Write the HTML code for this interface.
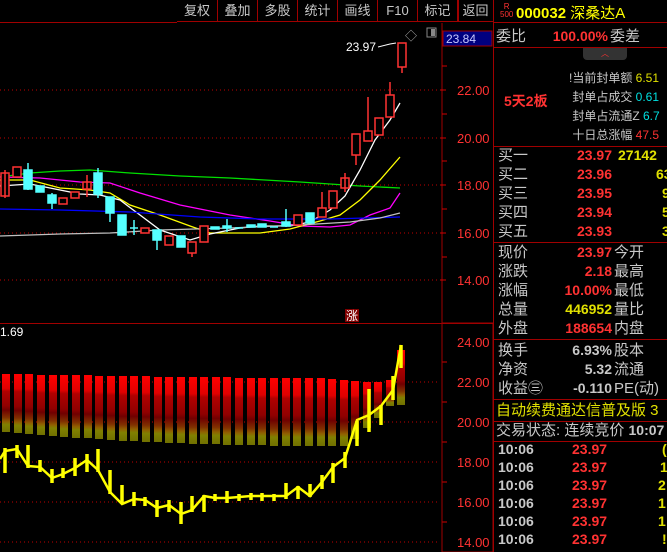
<!DOCTYPE html>
<html><head><meta charset="utf-8"><style>
*{margin:0;padding:0;box-sizing:border-box}
body{width:667px;height:552px;background:#000;overflow:hidden;position:relative;font-family:"Liberation Sans","Noto Sans CJK SC",sans-serif;color:#c8c8c8}
.tb{position:absolute;top:0;height:22px;border-right:1px solid #a00000;border-bottom:1px solid #a00000;font-size:13px;color:#c8c8c8;text-align:center;line-height:22px}
.rp{position:absolute;left:493px;top:0;width:174px;height:552px;border-left:1px solid #a00000}
.row{position:absolute;left:4px;font-size:15px;white-space:nowrap;height:19px;line-height:19px}
.n{position:absolute;font-weight:bold;font-size:14px;font-family:"Liberation Sans",sans-serif;white-space:nowrap;text-align:right}
.r{color:#ff3232}.y{color:#e0e000}.w{color:#c8c8c8}.c{color:#00e0e0}
.hl{position:absolute;left:0;width:174px;height:1px;background:#a00000}
</style></head><body>
<div class="tb" style="left:177px;width:41px">复权</div>
<div class="tb" style="left:218px;width:40px">叠加</div>
<div class="tb" style="left:258px;width:40px">多股</div>
<div class="tb" style="left:298px;width:40px">统计</div>
<div class="tb" style="left:338px;width:40px">画线</div>
<div class="tb" style="left:378px;width:40px">F10</div>
<div class="tb" style="left:418px;width:40px">标记</div>
<div class="tb" style="left:458px;width:35px;font-size:12px">+自选</div>
<div style="position:absolute;left:0;top:22px;width:177px;height:1px;background:#a00000"></div>
<div style="position:absolute;left:458px;top:0;width:35px;height:22px;font-size:13px;line-height:22px;text-align:center;border-bottom:1px solid #a00000;background:#000">返回</div>
<div style="position:absolute;left:458px;top:0;width:35px;height:22px;border-left:1px solid #a00000"></div>
<svg style="position:absolute;left:0;top:0" width="493" height="552">
<line x1="442" y1="23" x2="442" y2="552" stroke="#a00000"/>
<line x1="0" y1="323.5" x2="493" y2="323.5" stroke="#a00000"/>
<rect x="443" y="31" width="49" height="15" fill="#000080" stroke="#a00000"/>
<text x="446" y="43" fill="#c8c8ff" font-size="12" font-family="Liberation Sans">23.84</text>
<text x="405" y="40" fill="#aaa" font-size="12">◇</text>
<rect x="427" y="28" width="9" height="9" fill="none" stroke="#888"/><rect x="431" y="29" width="4" height="7" fill="#888"/>
<g stroke="#c00000" stroke-dasharray="1,3">
<line x1="0" y1="90" x2="440" y2="90"/><line x1="0" y1="138" x2="440" y2="138"/><line x1="0" y1="185" x2="440" y2="185"/><line x1="0" y1="233" x2="440" y2="233"/><line x1="0" y1="280" x2="440" y2="280"/>
<line x1="0" y1="382" x2="440" y2="382"/><line x1="0" y1="422" x2="440" y2="422"/><line x1="0" y1="462" x2="440" y2="462"/><line x1="0" y1="502" x2="440" y2="502"/><line x1="0" y1="542" x2="440" y2="542"/>
</g>
<g stroke="#d00000"><line x1="442" y1="66" x2="447" y2="66"/><line x1="442" y1="114" x2="447" y2="114"/><line x1="442" y1="161" x2="447" y2="161"/><line x1="442" y1="209" x2="447" y2="209"/><line x1="442" y1="257" x2="447" y2="257"/><line x1="442" y1="362" x2="447" y2="362"/><line x1="442" y1="402" x2="447" y2="402"/><line x1="442" y1="442" x2="447" y2="442"/><line x1="442" y1="482" x2="447" y2="482"/><line x1="442" y1="522" x2="447" y2="522"/>
<line x1="440" y1="90" x2="446" y2="90"/><line x1="440" y1="138" x2="446" y2="138"/><line x1="440" y1="185" x2="446" y2="185"/><line x1="440" y1="233" x2="446" y2="233"/><line x1="440" y1="280" x2="446" y2="280"/></g>
<g fill="#ff3232" font-size="13" font-family="Liberation Sans">
<text x="457" y="95">22.00</text><text x="457" y="143">20.00</text><text x="457" y="190">18.00</text><text x="457" y="238">16.00</text><text x="457" y="285">14.00</text>
<text x="457" y="347">24.00</text><text x="457" y="387">22.00</text><text x="457" y="427">20.00</text><text x="457" y="467">18.00</text><text x="457" y="507">16.00</text><text x="457" y="547">14.00</text>
</g>
<rect x="442" y="323" width="51" height="229" fill="none" stroke="#a00000"/>
<polyline fill="none" stroke="#00e000" stroke-width="1.3" points="0,177 30,173 60,171 90,170 130,173 180,176 230,178 300,182 360,186 400,188"/>
<polyline fill="none" stroke="#ff00ff" stroke-width="1.3" points="0,177 40,178 80,182 110,183 140,193 180,205 230,215 270,221 300,226 330,227 350,225 370,215 390,208 400,193"/>
<polyline fill="none" stroke="#ffff00" stroke-width="1.3" points="0,180 30,180 60,188 90,190 110,193 130,205 160,215 190,226 210,233 230,233 260,233 290,229 320,221 340,215 360,200 380,180 400,157"/>
<polyline fill="none" stroke="#ffffff" stroke-width="1.3" points="0,186 30,184 60,190 80,194 100,195 120,200 140,215 160,230 190,240 210,234 240,228 260,226 290,226 310,222 330,210 345,196 360,170 375,140 390,120 400,103"/>
<polyline fill="none" stroke="#0000ff" stroke-width="1.3" points="0,209 60,210 130,212 200,217 260,219 330,219 400,217"/>
<polyline fill="none" stroke="#c0c0c0" stroke-width="1.3" points="0,236 60,234 110,233 160,230 230,228 300,225 350,222 380,218 400,213"/>
<g stroke-width="1.5">
<g stroke="#ff3232" fill="#000">
<rect x="1" y="173" width="8" height="23"/><rect x="13" y="167" width="8" height="10"/><rect x="59" y="198" width="8" height="6"/><rect x="71" y="192" width="8" height="6"/><rect x="83" y="182" width="8" height="7"/><rect x="141" y="228" width="8" height="5"/><rect x="165" y="236" width="8" height="9"/><rect x="188" y="242" width="8" height="11"/><rect x="200" y="226" width="8" height="16"/><rect x="294" y="215" width="8" height="10"/><rect x="318" y="208" width="8" height="9"/><rect x="329" y="191" width="8" height="17"/><rect x="341" y="178" width="8" height="10"/><rect x="352" y="134" width="8" height="21"/><rect x="364" y="131" width="8" height="10"/><rect x="375" y="118" width="8" height="17"/><rect x="386" y="95" width="8" height="22"/><rect x="398" y="43" width="8" height="24"/>
<line x1="5" y1="170" x2="5" y2="198"/><line x1="87" y1="175" x2="87" y2="197"/><line x1="192" y1="253" x2="192" y2="257"/><line x1="345" y1="173" x2="345" y2="192"/><line x1="356" y1="155" x2="356" y2="165"/><line x1="368" y1="97" x2="368" y2="131"/><line x1="390" y1="82" x2="390" y2="95"/><line x1="402" y1="67" x2="402" y2="73"/><line x1="322" y1="192" x2="322" y2="208"/>
</g>
<g stroke="#55ffff" fill="#55ffff">
<rect x="24" y="170" width="8" height="19"/><rect x="36" y="186" width="8" height="6"/><rect x="48" y="195" width="8" height="8"/><rect x="94" y="173" width="8" height="21"/><rect x="106" y="197" width="8" height="16"/><rect x="118" y="215" width="8" height="20"/><rect x="153" y="230" width="8" height="10"/><rect x="177" y="236" width="8" height="11"/><rect x="211" y="227" width="8" height="2"/><rect x="223" y="226" width="8" height="2"/><rect x="247" y="225" width="8" height="2"/><rect x="258" y="224" width="8" height="3"/><rect x="282" y="222" width="8" height="4"/><rect x="306" y="213" width="8" height="10"/>
<line x1="28" y1="163" x2="28" y2="190"/><line x1="52" y1="193" x2="52" y2="209"/><line x1="98" y1="168" x2="98" y2="198"/><line x1="110" y1="213" x2="110" y2="222"/><line x1="157" y1="240" x2="157" y2="250"/><line x1="227" y1="219" x2="227" y2="232"/><line x1="286" y1="209" x2="286" y2="227"/><line x1="130" y1="228" x2="138" y2="228"/><line x1="134" y1="220" x2="134" y2="235"/><line x1="235" y1="228" x2="243" y2="228"/><line x1="270" y1="227" x2="278" y2="227"/>
</g></g>
<text x="346" y="51" fill="#fff" font-size="12">23.97</text>
<polyline points="378,47 390,44 396,43" fill="none" stroke="#fff"/>
<rect x="345" y="309" width="14" height="13" fill="#800000"/>
<text x="346" y="320" fill="#fff" font-size="12">涨</text>
<text x="0" y="336" fill="#fff" font-size="12">1.69</text>
<defs><linearGradient id="g" x1="0" y1="0" x2="0" y2="1">
<stop offset="0" stop-color="#ff0000"/><stop offset="0.25" stop-color="#e00000"/><stop offset="0.3" stop-color="#b00000"/><stop offset="0.55" stop-color="#900000"/><stop offset="0.62" stop-color="#700000"/><stop offset="0.75" stop-color="#803000"/><stop offset="0.82" stop-color="#906000"/><stop offset="0.87" stop-color="#808000"/><stop offset="1" stop-color="#707000"/></linearGradient></defs>
<g fill="url(#g)">
<rect x="2" y="374" width="8" height="58"/><rect x="14" y="374" width="8" height="59"/><rect x="25" y="374" width="8" height="60"/><rect x="37" y="375" width="8" height="60"/><rect x="49" y="375" width="8" height="61"/><rect x="60" y="375" width="8" height="62"/><rect x="72" y="375" width="8" height="63"/><rect x="84" y="375" width="8" height="63"/><rect x="95" y="376" width="8" height="63"/><rect x="107" y="376" width="8" height="64"/><rect x="119" y="376" width="8" height="65"/><rect x="130" y="376" width="8" height="65"/><rect x="142" y="376" width="8" height="66"/><rect x="154" y="377" width="8" height="65"/><rect x="165" y="377" width="8" height="66"/><rect x="177" y="377" width="8" height="66"/><rect x="189" y="377" width="8" height="67"/><rect x="200" y="377" width="8" height="67"/><rect x="212" y="377" width="8" height="67"/><rect x="223" y="377" width="8" height="68"/><rect x="235" y="378" width="8" height="67"/><rect x="247" y="378" width="8" height="67"/><rect x="258" y="378" width="8" height="67"/><rect x="270" y="378" width="8" height="68"/><rect x="282" y="378" width="8" height="68"/><rect x="293" y="378" width="8" height="68"/><rect x="305" y="378" width="8" height="68"/><rect x="317" y="378" width="8" height="68"/><rect x="328" y="379" width="8" height="67"/><rect x="340" y="380" width="8" height="66"/><rect x="351" y="381" width="8" height="58"/><rect x="363" y="382" width="8" height="46"/><rect x="374" y="382" width="8" height="36"/><rect x="386" y="380" width="8" height="26"/><rect x="397" y="350" width="8" height="55"/>
</g>
<polyline fill="none" stroke="#ffff00" stroke-width="2.5" points="0,459 5,451 17,449 28,466 40,467 52,478 63,474 75,468 87,460 98,470 110,492 122,504 134,499 145,500 157,508 169,505 181,514 192,510 204,496 215,498 227,498 239,497 251,496 262,496 274,496 286,496 298,487 310,496 322,482 333,467 345,458 357,420 369,415 381,406 393,390 401,345"/>
<g stroke="#ffff00" stroke-width="3.5">
<line x1="5" y1="448" x2="5" y2="473"/><line x1="17" y1="445" x2="17" y2="458"/><line x1="28" y1="445" x2="28" y2="468"/><line x1="40" y1="460" x2="40" y2="472"/><line x1="52" y1="469" x2="52" y2="483"/><line x1="63" y1="468" x2="63" y2="478"/><line x1="75" y1="458" x2="75" y2="476"/><line x1="87" y1="454" x2="87" y2="472"/><line x1="98" y1="449" x2="98" y2="472"/><line x1="110" y1="470" x2="110" y2="494"/><line x1="122" y1="485" x2="122" y2="504"/><line x1="134" y1="492" x2="134" y2="506"/><line x1="145" y1="497" x2="145" y2="506"/><line x1="157" y1="500" x2="157" y2="517"/><line x1="169" y1="500" x2="169" y2="512"/><line x1="181" y1="502" x2="181" y2="524"/><line x1="192" y1="496" x2="192" y2="512"/><line x1="204" y1="495" x2="204" y2="512"/><line x1="215" y1="494" x2="215" y2="501"/><line x1="227" y1="491" x2="227" y2="503"/><line x1="239" y1="494" x2="239" y2="501"/><line x1="251" y1="493" x2="251" y2="500"/><line x1="262" y1="493" x2="262" y2="501"/><line x1="274" y1="494" x2="274" y2="501"/><line x1="286" y1="483" x2="286" y2="499"/><line x1="298" y1="486" x2="298" y2="499"/><line x1="310" y1="484" x2="310" y2="497"/><line x1="322" y1="475" x2="322" y2="489"/><line x1="333" y1="463" x2="333" y2="483"/><line x1="345" y1="452" x2="345" y2="468"/><line x1="357" y1="421" x2="357" y2="446"/><line x1="369" y1="389" x2="369" y2="432"/><line x1="381" y1="405" x2="381" y2="425"/><line x1="393" y1="376" x2="393" y2="400"/><line x1="401" y1="345" x2="401" y2="368"/>
</g>
</svg>
<div class="rp">
<div style="position:absolute;left:6px;top:3px;font-size:8px;color:#ff3232;line-height:8px;text-align:center">R<br>500</div>
<div style="position:absolute;left:22px;top:2px;font-size:15px;color:#ffff00;font-weight:bold;white-space:nowrap">000032 <span style="font-weight:normal">深桑达A</span></div>
<div class="hl" style="top:22px"></div>
<div class="row" style="top:27px;left:2px">委比</div>
<div class="n r" style="left:50px;top:27px;width:64px;line-height:19px">100.00%</div>
<div class="row" style="top:27px;left:116px">委差</div>
<div class="hl" style="top:47px"></div>
<div style="position:absolute;left:89px;top:48px;width:44px;height:12px;background:#333;border-radius:0 0 4px 4px;color:#ff3232;font-size:8px;text-align:center">︿</div>
<div style="position:absolute;left:10px;top:91px;font-size:14px;color:#ff3232;font-weight:bold">5天2板</div>
<div style="position:absolute;left:75px;top:69px;font-size:12px;line-height:19px;white-space:nowrap;color:#c8c8c8">!当前封单额 <span class="y">6.51</span><br>&nbsp;封单占成交 <span class="c">0.61</span><br>&nbsp;封单占流通Z <span class="c">6.7</span><br>&nbsp;十日总涨幅 <span class="r">47.5</span></div>
<div class="hl" style="top:146px"></div>
<div class="row" style="top:146px">买一</div><div class="n r" style="left:60px;top:146px;width:58px;line-height:19px">23.97</div><div class="n y" style="left:124px;top:146px;width:50px;line-height:19px;text-align:left">27142</div>
<div class="row" style="top:165px">买二</div><div class="n r" style="left:60px;top:165px;width:58px;line-height:19px">23.96</div><div class="n y" style="left:162px;top:165px;line-height:19px">63</div>
<div class="row" style="top:184px">买三</div><div class="n r" style="left:60px;top:184px;width:58px;line-height:19px">23.95</div><div class="n y" style="left:168px;top:184px;line-height:19px">9</div>
<div class="row" style="top:203px">买四</div><div class="n r" style="left:60px;top:203px;width:58px;line-height:19px">23.94</div><div class="n y" style="left:168px;top:203px;line-height:19px">5</div>
<div class="row" style="top:222px">买五</div><div class="n r" style="left:60px;top:222px;width:58px;line-height:19px">23.93</div><div class="n y" style="left:168px;top:222px;line-height:19px">3</div>
<div class="hl" style="top:242px"></div>
<div class="row" style="top:243px">现价</div><div class="n r" style="left:50px;top:243px;width:68px;line-height:19px">23.97</div><div class="row" style="top:243px;left:120px">今开</div>
<div class="row" style="top:262px">涨跌</div><div class="n r" style="left:50px;top:262px;width:68px;line-height:19px">2.18</div><div class="row" style="top:262px;left:120px">最高</div>
<div class="row" style="top:281px">涨幅</div><div class="n r" style="left:50px;top:281px;width:68px;line-height:19px">10.00%</div><div class="row" style="top:281px;left:120px">最低</div>
<div class="row" style="top:300px">总量</div><div class="n y" style="left:50px;top:300px;width:68px;line-height:19px">446952</div><div class="row" style="top:300px;left:120px">量比</div>
<div class="row" style="top:319px">外盘</div><div class="n r" style="left:50px;top:319px;width:68px;line-height:19px">188654</div><div class="row" style="top:319px;left:120px">内盘</div>
<div class="hl" style="top:339px"></div>
<div class="row" style="top:341px">换手</div><div class="n w" style="left:50px;top:341px;width:68px;line-height:19px">6.93%</div><div class="row" style="top:341px;left:120px">股本</div>
<div class="row" style="top:360px">净资</div><div class="n w" style="left:50px;top:360px;width:68px;line-height:19px">5.32</div><div class="row" style="top:360px;left:120px">流通</div>
<div class="row" style="top:379px">收益㊂</div><div class="n w" style="left:50px;top:379px;width:68px;line-height:19px">-0.110</div><div class="row" style="top:379px;left:120px">PE(动)</div>
<div class="hl" style="top:399px"></div>
<div class="row y" style="top:401px;left:2px">自动续费通达信普及版 3</div>
<div class="hl" style="top:421px"></div>
<div class="row" style="top:421px;left:2px">交易状态: 连续竞价 <b style="font-size:14px">10:07</b></div>
<div class="hl" style="top:441px"></div>
<div class="n w" style="left:4px;top:440px;line-height:18px">10:06</div><div class="n r" style="left:78px;top:440px;line-height:18px">23.97</div><div class="n y" style="left:168px;top:440px;line-height:18px">(</div>
<div class="n w" style="left:4px;top:458px;line-height:18px">10:06</div><div class="n r" style="left:78px;top:458px;line-height:18px">23.97</div><div class="n y" style="left:166px;top:458px;line-height:18px">1</div>
<div class="n w" style="left:4px;top:476px;line-height:18px">10:06</div><div class="n r" style="left:78px;top:476px;line-height:18px">23.97</div><div class="n y" style="left:164px;top:476px;line-height:18px">2</div>
<div class="n w" style="left:4px;top:494px;line-height:18px">10:06</div><div class="n r" style="left:78px;top:494px;line-height:18px">23.97</div><div class="n y" style="left:164px;top:494px;line-height:18px">1</div>
<div class="n w" style="left:4px;top:512px;line-height:18px">10:06</div><div class="n r" style="left:78px;top:512px;line-height:18px">23.97</div><div class="n y" style="left:164px;top:512px;line-height:18px">1</div>
<div class="n w" style="left:4px;top:530px;line-height:18px">10:06</div><div class="n r" style="left:78px;top:530px;line-height:18px">23.97</div><div class="n y" style="left:168px;top:530px;line-height:18px">!</div>
</div>
</body></html>
